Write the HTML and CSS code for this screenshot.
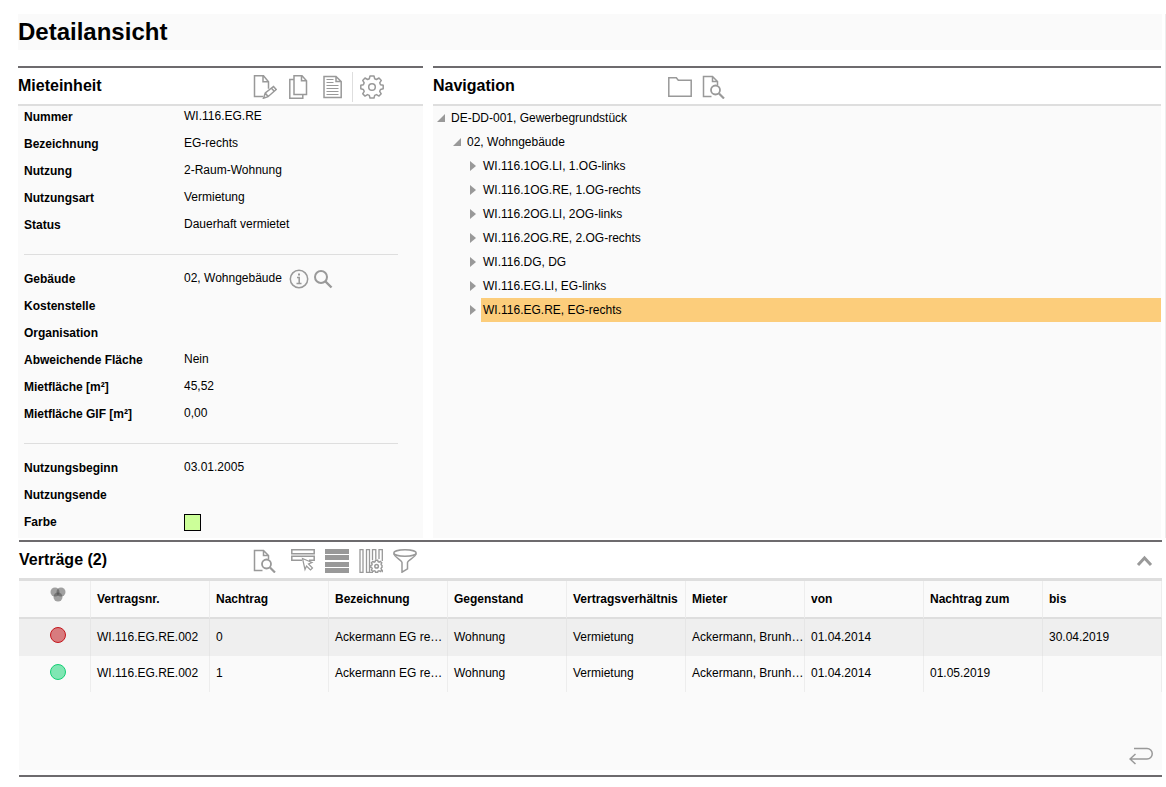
FILE: index.html
```html
<!DOCTYPE html>
<html lang="de">
<head>
<meta charset="utf-8">
<meta name="viewport" content="width=device-width, initial-scale=1">
<title>Detailansicht</title>
<link rel="stylesheet" href="styles.css">
</head>
<body>
<svg class="symbols" aria-hidden="true">
  <symbol id="doc-search" viewBox="0 0 24 24">
    <path d="M9.500 21.500H1.500V1.500h9l5 5v3.500M10.500 1.500v5h5"/>
    <circle cx="13.500" cy="15" r="4.500" stroke-width="1.800"/>
    <path d="M17 18.500l5 5" stroke-width="2.200"/>
  </symbol>
</svg>
<main class="page">
  <div class="details">
    <h1 class="page-title">Detailansicht</h1>
    <div class="columns">
      <section class="panel">
        <header class="panel-head">
          <h2>Mieteinheit</h2>
          <div class="toolbar">
            <button class="tool" aria-label="Bearbeiten"><svg class="icon" viewBox="0 0 24 24"><path d="M10 21.500H1.500V.800h9l5 6v7M10 .800v6h5.500"/><path d="M10.500 23.200l1.800-5.200 8.200-6.500 2.700 3-8.200 7.200zM18.500 13.200l2.700 3M12.300 18l2.700 3.500"/></svg></button>
            <button class="tool" aria-label="Kopieren"><svg class="icon" viewBox="0 0 24 24"><path d="M7 .800h8l4.500 5v13.700H7zM14.500.800v5h5M7 4.500H2.800v18.700h13V19.500"/></svg></button>
            <button class="tool" aria-label="Bericht"><svg class="icon" viewBox="0 0 24 24"><path d="M3 1.500h12l5.200 5v16H3zM15 1.500v5h5.200"/><path stroke-width="1" d="M5.500 4.500h7M5.500 7.500h7M5.500 10.500h12M5.500 13.500h12M5.500 16.500h12M5.500 19.500h12"/></svg></button>
            <span class="divider"></span>
            <button class="tool" aria-label="Einstellungen"><svg class="icon" viewBox="0 0 24 24"><path stroke-linejoin="round" d="M10 1h4l.7 2.800 1.700.7L19 3l2.300 2.400-1.600 2.400.8 1.900 2.700.6v3.500l-2.700.7-.8 1.800 1.500 2.500L19 21.100l-2.500-1.500-1.800.8L14 23h-4l-.7-2.600-1.800-.8L5 21.100 2.700 18.800l1.500-2.500-.8-1.800-2.600-.7v-3.500l2.600-.6.8-1.900-1.500-2.400L5 3l2.600 1.500 1.700-.7z"/><circle cx="12" cy="12" r="3.300"/></svg></button>
          </div>
        </header>
        <div class="panel-body">
          <dl class="fields">
            <div class="field"><dt>Nummer</dt><dd>WI.116.EG.RE</dd></div>
            <div class="field"><dt>Bezeichnung</dt><dd>EG-rechts</dd></div>
            <div class="field"><dt>Nutzung</dt><dd>2-Raum-Wohnung</dd></div>
            <div class="field"><dt>Nutzungsart</dt><dd>Vermietung</dd></div>
            <div class="field"><dt>Status</dt><dd>Dauerhaft vermietet</dd></div>
          </dl>
          <hr class="rule">
          <dl class="fields">
            <div class="field"><dt>Gebäude</dt><dd class="with-tools">02, Wohngebäude
              <span class="mini-tools"><button class="mini" aria-label="Information"><svg class="icon-mini" viewBox="0 0 20 20"><circle cx="10" cy="10" r="8.700"/><path d="M8 8.500h2.200v6M7.500 14.500h5"/><path d="M9 4.500h2v2H9z" fill="#999" stroke="none"/></svg></button><button class="mini" aria-label="Suchen"><svg class="icon-mini" viewBox="0 0 20 20"><circle cx="8" cy="8" r="6" stroke-width="2"/><path d="M12.500 12.500l6 6" stroke-width="2.400"/></svg></button></span></dd></div>
            <div class="field"><dt>Kostenstelle</dt><dd></dd></div>
            <div class="field"><dt>Organisation</dt><dd></dd></div>
            <div class="field"><dt>Abweichende Fläche</dt><dd>Nein</dd></div>
            <div class="field"><dt>Mietfläche [m²]</dt><dd>45,52</dd></div>
            <div class="field"><dt>Mietfläche GIF [m²]</dt><dd>0,00</dd></div>
          </dl>
          <hr class="rule">
          <dl class="fields">
            <div class="field"><dt>Nutzungsbeginn</dt><dd>03.01.2005</dd></div>
            <div class="field"><dt>Nutzungsende</dt><dd></dd></div>
            <div class="field"><dt>Farbe</dt><dd><span class="swatch"></span></dd></div>
          </dl>
        </div>
      </section>

      <section class="panel">
        <header class="panel-head">
          <h2>Navigation</h2>
          <div class="toolbar">
            <button class="tool" aria-label="Ordner"><svg class="icon" viewBox="0 0 24 24"><path d="M.8 21.200V2.800h7.500l2 2.500h12.900v15.900z"/></svg></button>
            <button class="tool" aria-label="Vorschau"><svg class="icon"><use href="#doc-search"/></svg></button>
          </div>
        </header>
        <div class="panel-body">
          <ul class="tree">
            <li><div class="node"><span class="arrow open"></span><span class="label">DE-DD-001, Gewerbegrundstück</span></div>
              <ul>
                <li><div class="node"><span class="arrow open"></span><span class="label">02, Wohngebäude</span></div>
                  <ul>
                    <li><div class="node"><span class="arrow"></span><span class="label">WI.116.1OG.LI, 1.OG-links</span></div></li>
                    <li><div class="node"><span class="arrow"></span><span class="label">WI.116.1OG.RE, 1.OG-rechts</span></div></li>
                    <li><div class="node"><span class="arrow"></span><span class="label">WI.116.2OG.LI, 2OG-links</span></div></li>
                    <li><div class="node"><span class="arrow"></span><span class="label">WI.116.2OG.RE, 2.OG-rechts</span></div></li>
                    <li><div class="node"><span class="arrow"></span><span class="label">WI.116.DG, DG</span></div></li>
                    <li><div class="node"><span class="arrow"></span><span class="label">WI.116.EG.LI, EG-links</span></div></li>
                    <li><div class="node"><span class="arrow"></span><span class="label selected">WI.116.EG.RE, EG-rechts</span></div></li>
                  </ul>
                </li>
              </ul>
            </li>
          </ul>
        </div>
      </section>
    </div>
  </div>

  <section class="panel contracts">
    <header class="panel-head">
      <h2>Verträge (2)</h2>
      <div class="toolbar">
        <button class="tool" aria-label="Vorschau"><svg class="icon"><use href="#doc-search"/></svg></button>
        <span class="space"></span>
        <button class="tool" aria-label="Auswahl"><svg class="icon" viewBox="0 0 24 24"><path d="M.8.800h22.400v3.900H.8zM11 11.200H.8V7.300h22.400v3.900H18"/><path stroke-width="1.200" d="M11.500 9.500l9.500 4-3.500 1.500 4 4-2 2-4-4-1.500 3.500z"/></svg></button>
        <button class="tool" aria-label="Liste"><svg class="icon solid" viewBox="0 0 24 24"><path d="M0 0h24v5H0zM0 6h24v5H0zM0 13h24v5H0zM0 19h24v5H0z"/></svg></button>
        <button class="tool" aria-label="Spalten"><svg class="icon" viewBox="0 0 24 24"><path stroke-width="1.300" d="M1 .700h3v22.600H1zM7.500.700h3v22.600h-3zM13.500 11V.700h3.300v9.800M20 10V.700h3.300V12M23.300 21v2.300M11 23.300h3"/><path stroke-width="1.400" d="M16.500 11.200h2.200l.4 1.500 1 .4 1.300-.8 1.400 1.500-.8 1.300.4 1 .6.300v2l-.6.300-.4 1 .8 1.300-1.400 1.500-1.300-.8-1 .4-.4 1.100h-2.200l-.4-1.100-1-.4-1.300.8-1.400-1.500.8-1.300-.4-1-1-.3v-2l1-.3.4-1-.8-1.300 1.400-1.500 1.300.8 1-.4z"/><circle cx="17.600" cy="17.200" r="1.800"/></svg></button>
        <button class="tool" aria-label="Filter"><svg class="icon" viewBox="0 0 24 24"><ellipse cx="12" cy="4" rx="11.200" ry="3.200"/><path d="M.8 4.500c.5 3.500 8 7 8.200 9v9.700l5.500-3.400v-6.300c.2-2 8.200-5.500 8.700-9"/></svg></button>
      </div>
      <button class="tool collapse" aria-label="Einklappen"><svg class="icon" viewBox="0 0 24 24"><path stroke-width="3" d="M5 16l6.500-7 6.500 7"/></svg></button>
    </header>
    <div class="panel-body">
      <table class="grid">
        <colgroup><col class="status-col"><col span="9"></colgroup>
        <thead>
          <tr>
            <th class="status" scope="col" aria-label="Ampel"><svg class="venn" viewBox="0 0 16 16"><circle cx="5" cy="5" r="4.500"/><circle cx="11" cy="5" r="4.500"/><circle cx="8" cy="10" r="4.500"/></svg></th>
            <th scope="col">Vertragsnr.</th><th scope="col">Nachtrag</th><th scope="col">Bezeichnung</th><th scope="col">Gegenstand</th><th scope="col">Vertragsverhältnis</th><th scope="col">Mieter</th><th scope="col">von</th><th scope="col">Nachtrag zum</th><th scope="col">bis</th>
          </tr>
        </thead>
        <tbody>
          <tr>
            <td class="status"><span class="dot red"></span></td>
            <td>WI.116.EG.RE.002</td><td>0</td><td>Ackermann EG re…</td><td>Wohnung</td><td>Vermietung</td><td>Ackermann, Brunh…</td><td>01.04.2014</td><td></td><td>30.04.2019</td>
          </tr>
          <tr>
            <td class="status"><span class="dot green"></span></td>
            <td>WI.116.EG.RE.002</td><td>1</td><td>Ackermann EG re…</td><td>Wohnung</td><td>Vermietung</td><td>Ackermann, Brunh…</td><td>01.04.2014</td><td>01.05.2019</td><td></td>
          </tr>
        </tbody>
      </table>
      <div class="panel-foot">
        <button class="tool" aria-label="Zurück"><svg class="icon" viewBox="0 0 24 24"><path d="M5 5.500h13a5.200 5.200 0 0 1 0 10.500H1M6.500 11L1 16l5.500 5"/></svg></button>
      </div>
    </div>
  </section>
</main>
</body>
</html>
```

FILE: styles.css
```css
* { box-sizing: border-box; }

body {
  margin: 0;
  background: #fff;
  color: #000;
  font: 12px/20px "Liberation Sans", Arial, sans-serif;
}

h1, h2, dl, dd, ul { margin: 0; padding: 0; }
ul { list-style: none; }

.symbols { position: absolute; width: 0; height: 0; }

.page { padding: 14px 0 0 18px; }

.details { border-right: 1px solid #ededed; }

.page-title {
  margin-right: 3px;
  background: #fafafa;
  font-size: 24px;
  line-height: 36px;
}

.columns {
  display: grid;
  grid-template-columns: 405fr 728fr;
  gap: 10px;
  padding-right: 4px;
  margin-top: 16px;
}

.panel {
  display: flex;
  flex-direction: column;
  border-top: 2px solid #6d6b6e;
}

.panel-head {
  display: flex;
  height: 38px;
  border-bottom: 2px solid #dedede;
}

.panel-head h2 {
  flex: 0 0 230px;
  font-size: 16px;
  line-height: 36px;
}

.panel-body {
  flex: 1;
  background: #fafafa;
}

.toolbar {
  display: flex;
  align-items: center;
  padding-top: 2px;
}

.tool, .mini {
  display: flex;
  align-items: center;
  justify-content: center;
  padding: 0;
  border: 0;
  background: none;
  cursor: pointer;
}

.tool { width: 34px; height: 30px; }
.mini { width: 24px; height: 22px; }

.icon, .icon-mini {
  fill: none;
  stroke: #999;
  stroke-width: 1.5;
}

.icon { width: 24px; height: 24px; }
.icon-mini { width: 20px; height: 20px; }
.solid { fill: #999; stroke: none; }

.divider {
  width: 1px;
  height: 30px;
  margin: 0 2px;
  background: #dedede;
}

.space { width: 4px; }

.field {
  display: grid;
  grid-template-columns: 160px 1fr;
  height: 27px;
  padding-left: 6px;
}

.field dt {
  font-weight: bold;
  line-height: 22px;
}

.with-tools { display: flex; }

.mini-tools {
  display: flex;
  margin-left: 5px;
}

.swatch {
  display: block;
  width: 17px;
  height: 17px;
  margin-top: 3px;
  border: 1px solid #000;
  background: #cf9;
}

.rule {
  height: 1px;
  margin: 13px 25px 13px 6px;
  border: 0;
  background: #dedede;
}

.tree ul { padding-left: 16px; }

.node {
  display: flex;
  align-items: center;
  height: 24px;
}

.arrow {
  width: 6px;
  height: 10px;
  margin: 0 5px;
  background: #999;
  clip-path: polygon(0 0, 100% 50%, 0 100%);
}

.arrow.open {
  width: 8px;
  height: 8px;
  margin: 0 4px;
  clip-path: polygon(100% 0, 100% 100%, 0 100%);
}

.label {
  flex: 1;
  padding-left: 2px;
  line-height: 24px;
}

.selected { background: #fccd7b; }

.contracts {
  margin: 2px 4px 0 1px;
  border-bottom: 2px solid #6d6b6e;
}

.contracts .panel-head {
  height: 39px;
  border-bottom-width: 3px;
}

.contracts .panel-head h2 { flex-basis: 229px; }

.contracts .panel-body { margin-bottom: 5px; }

.collapse {
  margin-left: auto;
  margin-top: 4px;
}

.grid {
  width: 100%;
  table-layout: fixed;
  border-collapse: separate;
  border-spacing: 0;
}

.status-col { width: 72px; }

.grid th, .grid td {
  height: 36px;
  padding: 0 1px 0 6px;
  border-right: 1px solid #ededed;
  text-align: left;
  white-space: nowrap;
}

.grid td { padding-bottom: 2px; }

.grid th {
  height: 38px;
  border-bottom: 2px solid #dedede;
}

.grid tbody tr:first-child td {
  height: 37px;
  border-right-color: #e6e6e6;
  background: #efefef;
}

.grid .status {
  padding: 0 0 5px 6px;
  text-align: center;
}

.grid th.status { padding-bottom: 9px; }

.venn {
  display: block;
  width: 16px;
  height: 16px;
  margin: 0 auto;
  fill: rgb(70 70 70 / 50%);
}

.dot {
  display: block;
  width: 16px;
  height: 16px;
  margin: 0 auto;
  border: 1px solid;
  border-radius: 50%;
}

.red { border-color: #c4161c; background: #d87b7e; }
.green { border-color: #14cf75; background: #80e6b3; }

.panel-foot {
  display: flex;
  justify-content: flex-end;
  padding: 48px 4px 0 0;
}
```
